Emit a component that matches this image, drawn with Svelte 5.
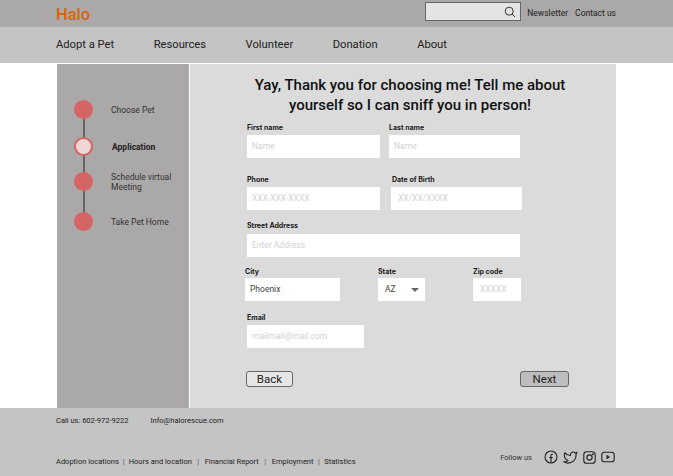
<script>
  const steps = [
    { label: 'Choose Pet' },
    { label: 'Application', active: true },
    { label: 'Schedule virtual Meeting' },
    { label: 'Take Pet Home' }
  ];
  const nav = ['Adopt a Pet', 'Resources', 'Volunteer', 'Donation', 'About'];
  const links = ['Adoption locations', 'Hours and location', 'Financial Report', 'Employment', 'Statistics'];
</script>

<div class="page">
  <header class="top">
    <span class="logo">Halo</span>
    <div class="top-right">
      <div class="search">
        <svg width="12" height="12" viewBox="0 0 12 12" fill="none" stroke="#333" stroke-width="1"><circle cx="5.2" cy="5.2" r="4"/><path d="M8 8l3 3"/></svg>
      </div>
      <span class="news">Newsletter</span>
      <span class="contact">Contact us</span>
    </div>
  </header>

  <nav class="nav">
    {#each nav as item}
      <span>{item}</span>
    {/each}
  </nav>

  <main class="main">
    <aside class="side">
      <div class="line"></div>
      {#each steps as step}
        <div class="step">
          <span class="dot" class:active={step.active}></span>
          <span class="step-label" class:bold={step.active}>{step.label}</span>
        </div>
      {/each}
    </aside>

    <section class="content">
      <h1>Yay, Thank you for choosing me! Tell me about yourself so I can sniff you in person!</h1>

      <div class="row r1">
        <div class="field w133"><label>First name</label><div class="input ph">Name</div></div>
        <div class="field w131"><label>Last name</label><div class="input ph">Name</div></div>
      </div>
      <div class="row r2">
        <div class="field w133"><label>Phone</label><div class="input ph">XXX-XXX-XXXX</div></div>
        <div class="field w131 dob"><label>Date of Birth</label><div class="input ph">XX/XX/XXXX</div></div>
      </div>
      <div class="row r3">
        <div class="field w273"><label>Street Address</label><div class="input ph">Enter Address</div></div>
      </div>
      <div class="row r4">
        <div class="field w95"><label>City</label><div class="input val">Phoenix</div></div>
        <div class="field w47"><label>State</label>
          <div class="input val select">AZ<span class="caret"></span></div>
        </div>
        <div class="field w48 zip"><label>Zip code</label><div class="input ph">XXXXX</div></div>
      </div>
      <div class="row r5">
        <div class="field w117"><label>Email</label><div class="input ph">mailmail@mail.com</div></div>
      </div>
      <div class="buttons">
        <button class="back">Back</button>
        <button class="next">Next</button>
      </div>
    </section>
  </main>

  <footer class="footer">
    <div class="contact-line">
      <span>Call us: 602-972-9222</span>
      <span>Info@halorescue.com</span>
    </div>
    <div class="foot-bottom">
      <div class="links">
        {#each links as link, i}
          {#if i > 0}<span class="sep">|</span>{/if}
          <span>{link}</span>
        {/each}
      </div>
      <div class="follow">
        <span class="follow-text">Follow us</span>
        <svg width="14" height="14" viewBox="0 0 14 14" fill="none" stroke="#222" stroke-width="1.1"><circle cx="7" cy="7" r="6"/><path d="M9 4.200H8.200C7.500 4.200 7 4.700 7 5.500v7.500M5.400 7.600h3.200"/></svg>
        <svg width="15" height="13" viewBox="0 0 24 21" fill="none" stroke="#222" stroke-width="1.8" stroke-linejoin="round"><path d="M22.500 2c-1 .7-2 1.100-3 1.300a4.300 4.300 0 0 0-7.600 3v1C8.400 7.400 5.200 5.800 3 3c0 0-4 8.500 5 12.500-2 1.400-4.400 2-7 2 9 5 20 0 20-11.500 0-.3 0-.6-.1-.8 1-1 1.700-2.100 1.600-3.200z"/></svg>
        <svg width="13" height="13" viewBox="0 0 13 13" fill="none" stroke="#222" stroke-width="1.1"><rect x="0.800" y="0.800" width="11.400" height="11.400" rx="2.800"/><circle cx="6.500" cy="6.500" r="2.600"/><circle cx="9.800" cy="3.200" r="0.400"/></svg>
        <svg width="14" height="12" viewBox="0 0 14 12" fill="none" stroke="#222" stroke-width="1.1"><rect x="0.800" y="1.200" width="12.400" height="9.600" rx="2.600"/><path d="M5.800 4.200v3.600L8.600 6z" fill="#222" stroke-width="0.600"/></svg>
      </div>
    </div>
  </footer>
</div>

<style>
  :global(body) {
    margin: 0;
    background: #fff;
  }
  .page {
    width: 673px;
    height: 476px;
    overflow: hidden;
    font-family: Roboto, "Liberation Sans", sans-serif;
    color: #222;
  }
  .top {
    height: 27px;
    background: #aaa8a8;
    display: flex;
    justify-content: space-between;
    padding: 0 57px 0 56px;
    box-sizing: border-box;
  }
  .logo {
    color: #dc6209;
    font-size: 16.500px;
    font-weight: 500;
    line-height: 29px;
  }
  .top-right {
    display: flex;
    align-items: flex-start;
  }
  .search {
    width: 96px;
    height: 19px;
    margin-top: 2px;
    box-sizing: border-box;
    background: #e4e4e4;
    border: 1px solid #666;
    display: flex;
    align-items: center;
    justify-content: flex-end;
    padding-right: 4px;
  }
  .news {
    font-size: 8.500px;
    margin-left: 6.500px;
    line-height: 26px;
  }
  .contact {
    font-size: 8.500px;
    margin-left: 7px;
    line-height: 27px;
  }
  .nav {
    height: 34px;
    background: #c4c4c4;
    padding-left: 56px;
    padding-bottom: 2px;
    display: flex;
    align-items: center;
    gap: 39.500px;
    font-size: 11.200px;
    color: #222;
    border-bottom: 1px solid #fff;
  }
  .main {
    display: flex;
    height: 344px;
    padding-left: 57px;
    width: 559px;
    gap: 1px;
  }
  .side {
    width: 132px;
    background: #aaa8a8;
    position: relative;
    padding-top: 27px;
    box-sizing: border-box;
    flex: none;
  }
  .line {
    position: absolute;
    left: 26px;
    top: 45px;
    width: 1.500px;
    height: 112px;
    background: #666;
  }
  .step {
    display: flex;
    align-items: center;
    height: 37px;
    position: relative;
    padding-left: 17px;
  }
  .step:nth-child(4) { margin-top: -2px; }
  .step:nth-child(5) { margin-top: 3px; }
  .dot {
    width: 19px;
    height: 19px;
    border-radius: 50%;
    background: #d56464;
    flex: none;
    box-sizing: border-box;
  }
  .dot.active {
    background: #f0d6d4;
    border: 2px solid #d56464;
  }
  .step-label {
    font-size: 8.500px;
    line-height: 10px;
    margin-left: 18px;
    width: 66px;
    color: #333;
  }
  .step-label.bold {
    font-weight: 700;
    margin-left: 19px;
    color: #222;
  }
  .content {
    width: 426px;
    background: #dbdbdb;
    box-sizing: border-box;
    padding-top: 12px;
    flex: none;
  }
  h1 {
    margin: 0;
    width: 340px;
    margin-left: 50px;
    font-family: Roboto, "Liberation Sans", sans-serif;
    font-size: 15px;
    font-weight: 500;
    line-height: 19.500px;
    text-align: center;
    color: #111;
  }
  .row {
    display: flex;
    padding-left: 57px;
  }
  .r1 { margin-top: 8px; gap: 9px; }
  .r2 { margin-top: 17px; gap: 11px; }
  .r3 { margin-top: 11px; }
  .r4 { margin-top: 10px; padding-left: 55px; }
  .r5 { margin-top: 12px; }
  .r4 .field:nth-child(2) { margin-left: 38px; }
  .r4 .field:nth-child(3) { margin-left: 48px; }
  .field label {
    display: block;
    font-family: Inter, "Liberation Sans", sans-serif;
    font-size: 7px;
    font-weight: 700;
    line-height: 9px;
    margin-bottom: 3px;
    color: #1a1a1a;
  }
  .r3 .field label { margin-bottom: 4px; }
  .r4 .field label { margin-bottom: 2px; }
  .dob label { margin-left: 1px; }
  .input {
    height: 23px;
    background: #fff;
    font-size: 8.500px;
    line-height: 23px;
    padding-left: 5px;
    box-sizing: border-box;
  }
  .dob .input, .zip .input { padding-left: 7px; }
  .ph { color: #d2d2d2; }
  .val { color: #444; }
  .select {
    display: flex;
    align-items: center;
    padding-left: 7px;
    position: relative;
  }
  .caret {
    position: absolute;
    right: 6px;
    top: 10px;
    border-left: 4px solid transparent;
    border-right: 4px solid transparent;
    border-top: 4px solid #666;
  }
  .w133 { width: 133px; }
  .w131 { width: 131px; }
  .w273 { width: 273px; }
  .w95 { width: 95px; }
  .w47 { width: 47px; }
  .w48 { width: 48px; }
  .w117 { width: 117px; }
  .buttons {
    display: flex;
    justify-content: space-between;
    margin-top: 23px;
    padding: 0 47px 0 56px;
  }
  button {
    height: 16px;
    padding: 0;
    border-radius: 3px;
    font-family: Roboto, "Liberation Sans", sans-serif;
    font-size: 11.500px;
    line-height: 14px;
    color: #222;
    border: 1px solid #666;
    box-sizing: border-box;
  }
  .back {
    width: 47px;
    background: #e6e6e6;
  }
  .next {
    width: 49px;
    background: #bdbdbd;
  }
  .footer {
    height: 68px;
    background: #c4c4c4;
    padding: 0 57px 0 56px;
    box-sizing: border-box;
    font-size: 7.500px;
  }
  .contact-line {
    display: flex;
    gap: 22px;
    padding-top: 8px;
    line-height: 10px;
    color: #222;
  }
  .foot-bottom {
    display: flex;
    justify-content: space-between;
    align-items: center;
    margin-top: 23px;
    height: 16px;
  }
  .links {
    display: flex;
    gap: 5.500px;
    color: #222;
    padding-top: 9px;
  }
  .sep { color: #555; }
  .sep:nth-child(2) { margin: 0 -1.500px; }
  .sep:nth-child(8) { margin: 0 -1px; }
  .follow {
    display: flex;
    align-items: center;
    gap: 5px;
    padding-right: 1px;
  }
  .follow-text {
    margin-right: 7px;
    color: #333;
  }
</style>
